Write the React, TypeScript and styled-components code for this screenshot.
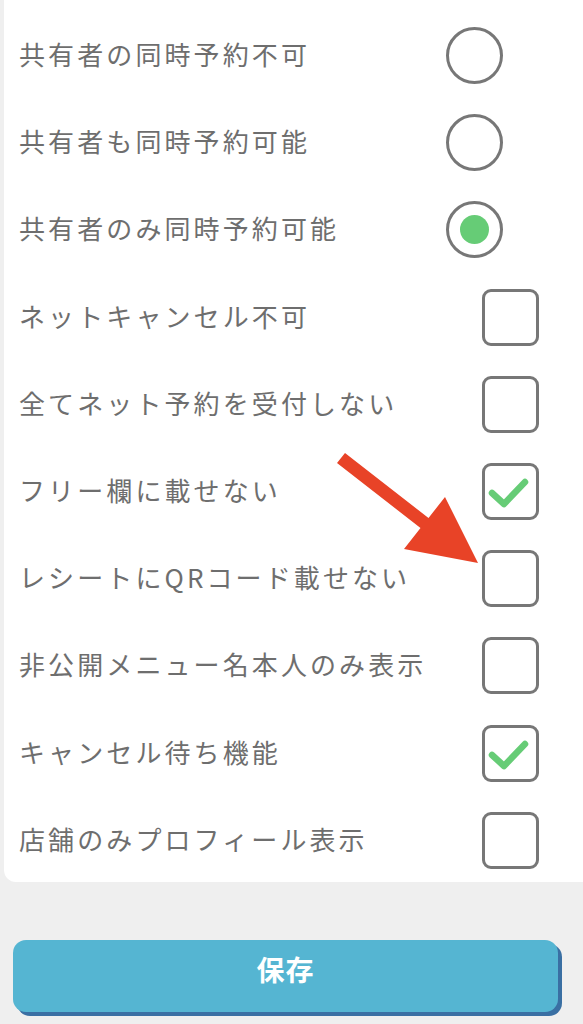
import React from "react";
import styled, { createGlobalStyle } from "styled-components";

type Option = {
  label: string;
  kind: "radio" | "check";
  checked: boolean;
};

const OPTIONS: Option[] = [
  { label: "共有者の同時予約不可", kind: "radio", checked: false },
  { label: "共有者も同時予約可能", kind: "radio", checked: false },
  { label: "共有者のみ同時予約可能", kind: "radio", checked: true },
  { label: "ネットキャンセル不可", kind: "check", checked: false },
  { label: "全てネット予約を受付しない", kind: "check", checked: false },
  { label: "フリー欄に載せない", kind: "check", checked: true },
  { label: "レシートにQRコード載せない", kind: "check", checked: false },
  { label: "非公開メニュー名本人のみ表示", kind: "check", checked: false },
  { label: "キャンセル待ち機能", kind: "check", checked: true },
  { label: "店舗のみプロフィール表示", kind: "check", checked: false },
];

const App = () => {
  return (
    <>
      <GlobalStyle />
      <Page>
        <Card>
          {OPTIONS.map((opt) => (
            <Row key={opt.label}>
              <Label>{opt.label}</Label>
              {opt.kind === "radio" ? (
                <Radio>{opt.checked && <Dot />}</Radio>
              ) : (
                <CheckBox>
                  {opt.checked && (
                    <svg width="57" height="57" viewBox="0 0 57 57">
                      <polyline
                        points="10,30 22,41 43,19"
                        fill="none"
                        stroke="#66cc76"
                        strokeWidth="6.5"
                        strokeLinecap="round"
                        strokeLinejoin="round"
                      />
                    </svg>
                  )}
                </CheckBox>
              )}
            </Row>
          ))}
        </Card>
        <SaveButton>保存</SaveButton>

        {/* 注目矢印 */}
        <Arrow width="160" height="130" viewBox="330 445 160 130">
          <polygon
            points="345,453 428.5,518 445,497 478,563 404,549 420.5,528 337,463"
            fill="#e84327"
          />
        </Arrow>
      </Page>
    </>
  );
};

const GlobalStyle = createGlobalStyle`
  html, body {
    margin: 0;
    padding: 0;
    background-color: #efefef;
    overflow: hidden;
  }
  body {
    font-family: "Noto Sans CJK JP", "Noto Sans", sans-serif;
  }
`;

const Page = styled.div`
  position: relative;
  width: 583px;
  height: 1024px;
  display: flex;
  flex-direction: column;
`;

const Card = styled.div`
  margin-left: 4px;
  padding-top: 12px;
  background-color: #ffffff;
  border-radius: 0 0 0 12px;
  height: 870px;
  display: flex;
  flex-direction: column;
`;

const Row = styled.div`
  height: 87.2px;
  flex-shrink: 0;
  display: flex;
  align-items: center;
  justify-content: space-between;
  padding-left: 15px;
`;

const Label = styled.div`
  font-size: 26px;
  letter-spacing: 3.1px;
  color: #6e6e6e;
  white-space: nowrap;
  margin-bottom: 4px;
`;

const Radio = styled.div`
  box-sizing: border-box;
  width: 57px;
  height: 57px;
  margin-right: 80px;
  border: 3px solid #777777;
  border-radius: 50%;
  display: flex;
  align-items: center;
  justify-content: center;
`;

const Dot = styled.div`
  width: 29px;
  height: 29px;
  border-radius: 50%;
  background-color: #66cc76;
`;

const CheckBox = styled.div`
  box-sizing: border-box;
  width: 57px;
  height: 57px;
  margin-right: 44px;
  border: 3px solid #777777;
  border-radius: 9px;
  position: relative;

  svg {
    position: absolute;
    left: -3px;
    top: -3px;
  }
`;

const SaveButton = styled.button`
  box-sizing: border-box;
  margin-top: 58px;
  margin-left: 13px;
  width: 545px;
  height: 72px;
  padding: 0 0 14px;
  border: none;
  border-radius: 13px;
  background-color: #55b5d2;
  box-shadow: 4px 4px 0 #3a6fa3;
  color: #ffffff;
  font-family: "Noto Sans CJK JP", sans-serif;
  font-size: 28px;
  font-weight: 700;
  letter-spacing: 1px;
`;

const Arrow = styled.svg`
  position: absolute;
  left: 330px;
  top: 445px;
`;

export default App;
